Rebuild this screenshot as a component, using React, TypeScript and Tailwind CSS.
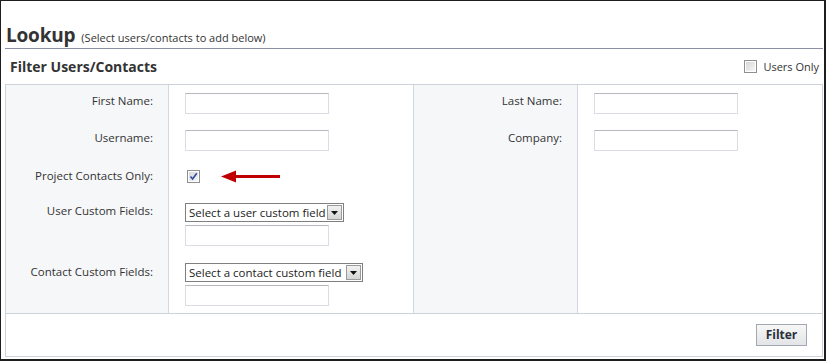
import React from "react";

function TextBox({ w = "w-[144px]" }: { w?: string }) {
  return (
    <div
      className={`${w} h-[21px] bg-white border border-[#dadde3] border-t-[#b5b8bf]`}
    />
  );
}

function Select({ label, w }: { label: string; w: string }) {
  return (
    <div
      className={`${w} h-[19px] flex items-stretch border border-[#7f7f7f] bg-white`}
    >
      <div className="flex-1 pl-[3px] text-[11.5px] leading-[17px] text-[#222] whitespace-nowrap">
        {label}
      </div>
      <div className="w-[15px] m-[1px] border border-[#9a9a9a] bg-gradient-to-b from-[#f2f2f2] to-[#d4d4d4] flex items-center justify-center">
        <svg width="7" height="4" viewBox="0 0 7 4">
          <path d="M0 0 L7 0 L3.5 4 Z" fill="#111" />
        </svg>
      </div>
    </div>
  );
}

function CheckBox({ checked }: { checked?: boolean }) {
  return (
    <div className="w-[13px] h-[13px] border border-[#8e8f8f] bg-white p-[1px]">
      <div className="w-full h-full bg-gradient-to-br from-[#d6d6d6] to-[#f7f7f7] flex items-center justify-center">
        {checked && (
          <svg width="9" height="9" viewBox="0 0 9 9">
            <path
              d="M1.5 4.5 L3.6 7 L7.8 1.2"
              fill="none"
              stroke="#2c4aa3"
              strokeWidth="1.6"
            />
          </svg>
        )}
      </div>
    </div>
  );
}

const labelCell =
  "bg-[#f6f7f9] border-r border-[#d3d7df] text-right pr-[15px] text-[11.5px] leading-[16px] text-[#333] whitespace-nowrap";
const inputCell = "border-r border-[#d3d7df] pl-[16px]";

export default function App() {
  return (
    <div className="w-[826px] h-[361px] bg-white border-t border-l border-r-2 border-b-2 border-[#1e1e1e] pl-[4px] pr-[1px] font-['Open_Sans',sans-serif] text-[#333] overflow-hidden">
      <div className="h-[48px] flex items-end border-b border-[#8b91a3]">
        <span className="text-[19px] font-bold leading-[25px] tracking-[-0.2px] text-[#333] pl-[1px]">
          Lookup
        </span>
        <span className="ml-[6px] mb-[3px] text-[11px] leading-[14px] text-[#333]">
          (Select users/contacts to add below)
        </span>
      </div>
      <div className="h-[35px] flex items-center justify-between pl-[5px] pr-[4px]">
        <span className="text-[14px] font-bold leading-[18px] text-[#333]">
          Filter Users/Contacts
        </span>
        <div className="flex items-center gap-[6px]">
          <CheckBox />
          <span className="text-[11px] leading-[16px] text-[#333]">Users Only</span>
        </div>
      </div>
      <div className="border border-[#cdd1da]">
        <div className="grid grid-cols-[163px_245px_164px_1fr] grid-rows-[37px_37px_33px_61px_60px]">
          {/* row 1 */}
          <div className={`${labelCell} pt-[8px]`}>First Name:</div>
          <div className={`${inputCell} pt-[8px]`}>
            <TextBox />
          </div>
          <div className={`${labelCell} pt-[8px]`}>Last Name:</div>
          <div className="pl-[16px] pt-[8px]">
            <TextBox />
          </div>
          {/* row 2 */}
          <div className={`${labelCell} pt-[8px]`}>Username:</div>
          <div className={`${inputCell} pt-[8px]`}>
            <TextBox />
          </div>
          <div className={`${labelCell} pt-[8px]`}>Company:</div>
          <div className="pl-[16px] pt-[8px]">
            <TextBox />
          </div>
          {/* row 3 */}
          <div className={`${labelCell} pt-[9px]`}>Project Contacts Only:</div>
          <div className={`${inputCell} pt-[11px] pl-[18px] flex items-start`}>
            <CheckBox checked />
            <svg className="ml-[21px]" width="60" height="13" viewBox="0 0 60 13">
              <path d="M0 6.5 L15 0.5 L15 5 L59 5 L59 8 L15 8 L15 12.5 Z" fill="#c00000" />
            </svg>
          </div>
          <div className={labelCell} />
          <div />
          {/* row 4 */}
          <div className={`${labelCell} pt-[11px]`}>User Custom Fields:</div>
          <div className={`${inputCell} pt-[11px] flex flex-col gap-[3px]`}>
            <Select label="Select a user custom field" w="w-[159px]" />
            <TextBox />
          </div>
          <div className={labelCell} />
          <div />
          {/* row 5 */}
          <div className={`${labelCell} pt-[11px]`}>Contact Custom Fields:</div>
          <div className={`${inputCell} pt-[10px] flex flex-col gap-[3px]`}>
            <Select label="Select a contact custom field" w="w-[178px]" />
            <TextBox />
          </div>
          <div className={labelCell} />
          <div />
        </div>
        <div className="h-[43px] border-t border-[#cdd1da] flex justify-end items-start pt-[10px] pr-[15px]">
          <button className="w-[51px] h-[22px] border border-[#a2a7b4] bg-gradient-to-b from-[#f7f7f7] to-[#e3e4e6] text-[12px] font-bold leading-[18px] text-[#2a2f3a]">
            Filter
          </button>
        </div>
      </div>
    </div>
  );
}
